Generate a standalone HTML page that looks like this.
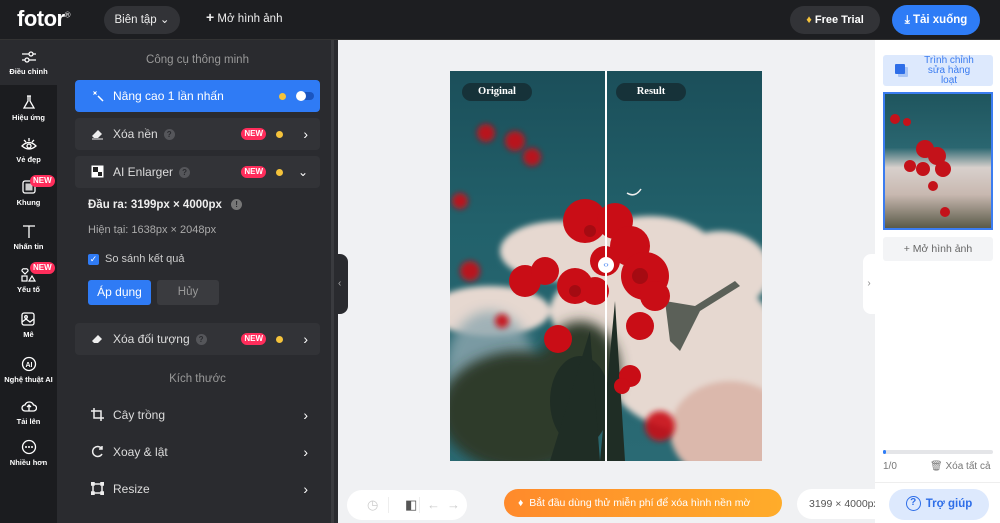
<!DOCTYPE html><html><head><meta charset="utf-8"><style>
*{box-sizing:border-box;margin:0;padding:0}
html{overflow:hidden;width:1000px;height:523px}
body{width:1000px;height:523px;overflow:hidden;font-family:"Liberation Sans",sans-serif;background:#f0f1f3;position:relative;font-size:12px}
.top{position:absolute;left:0;top:0;width:1000px;height:40px;background:#1d1e21;border-bottom:1px solid #333}
.side{position:absolute;left:0;top:40px;width:57px;height:483px;background:#1b1c1f}
.panel{position:absolute;left:57px;top:40px;width:281px;height:483px;background:#2a2b2f}
.si{position:absolute;left:0;width:57px;text-align:center;color:#fff;font-size:7.5px;font-weight:bold}
.si svg{display:block;margin:0 auto 3px}
.row{position:absolute;left:75px;width:245px;height:32px;border-radius:4px;background:#323337;color:#ddd;font-size:12px;line-height:32px;padding-left:38px}
.new{position:absolute;right:54px;top:10px;background:#ff2d5b;color:#fff;font-size:8px;font-weight:bold;border-radius:6px;padding:0 3px;line-height:12px}
.dot{position:absolute;right:37px;top:13px;width:7px;height:7px;border-radius:50%;background:#f5c33b}
.chev{position:absolute;right:12px;top:0;color:#fff;font-size:14px}
.q{display:inline-block;width:11px;height:11px;border-radius:50%;background:#55565a;color:#2a2b2f;font-size:8px;line-height:11px;text-align:center;margin-left:6px;vertical-align:middle;font-weight:bold}
.ic{position:absolute;left:16px;top:9px;width:13px;height:13px}
.plain{position:absolute;left:90px;color:#ddd;font-size:12px}
</style></head><body>
<div class="top">
<div style="position:absolute;left:17px;top:6px;color:#fff;font-size:22px;font-weight:bold;letter-spacing:-0.5px">fotor<sup style="font-size:8px;font-weight:normal">®</sup></div>
<div style="position:absolute;left:104px;top:6px;width:76px;height:28px;border-radius:14px;background:#323337;color:#eee;font-size:11.5px;line-height:28px;text-align:center">Biên tập ⌄</div>
<div style="position:absolute;left:206px;top:12px;color:#eee;font-size:11.5px"><b style="font-size:14px;line-height:10px">+</b> Mở hình ảnh</div>
<div style="position:absolute;left:790px;top:6px;width:90px;height:28px;border-radius:14px;background:#323337;color:#fff;font-size:11px;font-weight:bold;line-height:28px;text-align:center"><span style="color:#f5c33b">♦</span> Free Trial</div>
<div style="position:absolute;left:892px;top:5px;width:88px;height:30px;border-radius:15px;background:#2e7cf6;color:#fff;font-size:11.5px;font-weight:bold;line-height:30px;text-align:center">⤓ Tải xuống</div>
</div>
<div class="side">
<div style="position:absolute;left:0;top:0;width:57px;height:45px;background:#2a2b2f"></div>
<div class="si" style="top:10px"><svg width="16" height="14" viewBox="0 0 16 14" fill="none" stroke="#fff" stroke-width="1.3"><path d="M1 4h14M1 10h14"/><circle cx="10" cy="4" r="2" fill="#2a2b2f"/><circle cx="6" cy="10" r="2" fill="#2a2b2f"/></svg>Điều chỉnh</div>
<div class="si" style="top:55px"><svg width="14" height="15" viewBox="0 0 14 15" fill="none" stroke="#fff" stroke-width="1.3"><path d="M5 1h4M6 1v5L2 13h10L8 6V1"/></svg>Hiệu ứng</div>
<div class="si" style="top:97px"><svg width="16" height="15" viewBox="0 0 16 15" fill="none" stroke="#fff" stroke-width="1.3"><path d="M1 9q7-7 14 0q-7 6-14 0z"/><circle cx="8" cy="9" r="2"/><path d="M8 1v3M3 3l2 2M13 3l-2 2"/></svg>Vẻ đẹp</div>
<div class="si" style="top:140px"><svg width="14" height="15" viewBox="0 0 14 15"><rect x="1" y="1" width="12" height="12" rx="2" fill="none" stroke="#fff" stroke-width="1.3"/><rect x="3.5" y="3.5" width="7" height="7" fill="#ccc"/></svg>Khung</div>
<div class="new" style="left:30px;right:auto;top:135px">NEW</div>
<div class="si" style="top:184px"><svg width="14" height="15" viewBox="0 0 14 15" fill="none" stroke="#fff" stroke-width="1.3"><path d="M1 2h12M7 2v12"/></svg>Nhấn tin</div>
<div class="si" style="top:227px"><svg width="16" height="15" viewBox="0 0 16 15" fill="none" stroke="#fff" stroke-width="1.2"><path d="M4 7L1 4a2 2 0 0 1 3-2a2 2 0 0 1 3 2z"/><rect x="1" y="9" width="5" height="5"/><path d="M11 9l3 5h-6z"/></svg>Yếu tố</div>
<div class="new" style="left:30px;right:auto;top:222px">NEW</div>
<div class="si" style="top:272px"><svg width="15" height="15" viewBox="0 0 15 15" fill="none" stroke="#fff" stroke-width="1.3"><rect x="1" y="1" width="12" height="12" rx="2"/><path d="M1 10l4-3 4 3 4-3"/><circle cx="5" cy="5" r="1.3"/></svg>Mê</div>
<div class="si" style="top:316px"><svg width="16" height="16" viewBox="0 0 16 16"><circle cx="8" cy="8" r="6.5" fill="none" stroke="#fff" stroke-width="1.3"/><text x="8" y="11" font-size="7" font-weight="bold" fill="#fff" text-anchor="middle" font-family="Liberation Sans">AI</text></svg>Nghệ thuật AI</div>
<div class="si" style="top:359px"><svg width="16" height="15" viewBox="0 0 16 15" fill="none" stroke="#fff" stroke-width="1.3"><path d="M4 12a3 3 0 0 1 0-6a4.5 4.5 0 0 1 8.5 0a3 3 0 0 1 0 6z"/><path d="M8 12V6M6 8l2-2 2 2"/></svg>Tải lên</div>
<div class="si" style="top:399px"><svg width="16" height="16" viewBox="0 0 16 16"><circle cx="8" cy="8" r="6.5" fill="none" stroke="#fff" stroke-width="1.3"/><circle cx="5" cy="8" r="1" fill="#fff"/><circle cx="8" cy="8" r="1" fill="#fff"/><circle cx="11" cy="8" r="1" fill="#fff"/></svg>Nhiều hơn</div>
</div>
<div class="panel"></div>
<div style="position:absolute;left:331px;top:40px;width:3px;height:483px;background:#3a3b3f"></div>
<div style="position:absolute;left:57px;top:54px;width:281px;text-align:center;color:#999;font-size:11.5px">Công cụ thông minh</div>
<div class="row" style="top:80px;background:#2f7bf5;color:#fff">
<svg class="ic" viewBox="0 0 13 13" fill="#fff"><path d="M2 2l2 1 2-1-1 2 1 2-2-1-2 1 1-2z"/><path d="M7 7l5 5" stroke="#fff" stroke-width="1.5"/></svg>Nâng cao 1 lần nhấn
<div class="dot" style="right:34px"></div>
<div style="position:absolute;right:6px;top:12px;width:18px;height:8px;border-radius:4px;background:#1a55c0"></div>
<div style="position:absolute;right:14px;top:11px;width:10px;height:10px;border-radius:50%;background:#fff"></div>
</div>
<div class="row" style="top:118px"><svg class="ic" viewBox="0 0 13 13"><path d="M1 9l6-6 4 4-4 4H3z" fill="#eee"/><path d="M1 12h11" stroke="#eee"/></svg>Xóa nền<span class="q">?</span><div class="new">NEW</div><div class="dot"></div><div class="chev">›</div></div>
<div class="row" style="top:156px"><svg class="ic" viewBox="0 0 13 13"><rect x=".5" y=".5" width="12" height="12" fill="#fff"/><rect x="2" y="2" width="5" height="5" fill="#222"/><rect x="7" y="7" width="4" height="4" fill="#222"/></svg>AI Enlarger<span class="q">?</span><div class="new">NEW</div><div class="dot"></div><div class="chev" style="font-size:12px">⌄</div></div>
<div class="plain" style="left:88px;top:199px;color:#eee;font-weight:bold;font-size:11.5px">Đầu ra: 3199px × 4000px <span class="q" style="background:#777">!</span></div>
<div class="plain" style="left:88px;top:224px;color:#aaa;font-size:11px">Hiện tại: 1638px × 2048px</div>
<div style="position:absolute;left:88px;top:254px;width:11px;height:11px;border-radius:2px;background:#2f7bf5;color:#fff;font-size:9px;line-height:11px;text-align:center">✓</div>
<div class="plain" style="left:105px;top:253px;color:#ccc;font-size:11px">So sánh kết quả</div>
<div style="position:absolute;left:88px;top:280px;width:63px;height:25px;border-radius:3px;background:#2f7bf5;color:#fff;font-size:12px;line-height:25px;text-align:center">Áp dụng</div>
<div style="position:absolute;left:157px;top:280px;width:62px;height:25px;border-radius:3px;background:#3a3b3f;color:#999;font-size:11.5px;line-height:25px;text-align:center">Hủy</div>
<div class="row" style="top:323px"><svg class="ic" viewBox="0 0 13 13"><path d="M1 9l6-6 4 4-4 4H3z" fill="#eee"/></svg>Xóa đối tượng<span class="q">?</span><div class="new">NEW</div><div class="dot"></div><div class="chev">›</div></div>
<div style="position:absolute;left:57px;top:373px;width:281px;text-align:center;color:#999;font-size:11.5px">Kích thước</div>
<div class="row" style="top:399px;background:none"><svg class="ic" viewBox="0 0 13 13" fill="none" stroke="#eee" stroke-width="1.5"><path d="M3 0v10h10M0 3h10v10"/></svg>Cây trồng<div class="chev">›</div></div>
<div class="row" style="top:436px;background:none"><svg class="ic" viewBox="0 0 13 13" fill="none" stroke="#eee" stroke-width="1.5"><path d="M11 4A5 5 0 1 0 11 9M11 1v3H8"/></svg>Xoay &amp; lật<div class="chev">›</div></div>
<div class="row" style="top:473px;background:none"><svg class="ic" viewBox="0 0 13 13" fill="none" stroke="#eee" stroke-width="1.5"><rect x="2" y="2" width="9" height="9"/><rect x="0" y="0" width="3" height="3" fill="#eee"/><rect x="10" y="0" width="3" height="3" fill="#eee"/><rect x="0" y="10" width="3" height="3" fill="#eee"/><rect x="10" y="10" width="3" height="3" fill="#eee"/></svg>Resize<div class="chev">›</div></div>
<div style="position:absolute;left:338px;top:254px;width:10px;height:60px;background:#2a2b2f;border-radius:0 8px 8px 0;color:#aaa;font-size:10px;line-height:60px">‹</div>
<div style="position:absolute;left:863px;top:254px;width:12px;height:60px;background:#fff;border-radius:8px 0 0 8px;color:#888;font-size:10px;line-height:60px;text-align:center">›</div>
<!-- image -->
<div style="position:absolute;left:450px;top:71px;width:312px;height:390px;overflow:hidden;background:linear-gradient(180deg,#1b4f5a 0%,#22616b 40%,#2a6a74 100%)">
<svg width="312" height="390" viewBox="0 0 312 390">
<defs><filter id="b"><feGaussianBlur stdDeviation="3"/></filter><filter id="b2"><feGaussianBlur stdDeviation="6"/></filter></defs>
<g fill="#e6d8d0" filter="url(#b)">
<ellipse cx="110" cy="180" rx="60" ry="30"/><ellipse cx="200" cy="190" rx="70" ry="45"/><ellipse cx="270" cy="200" rx="50" ry="40"/>
<ellipse cx="240" cy="280" rx="90" ry="80"/><ellipse cx="40" cy="240" rx="60" ry="25"/><ellipse cx="280" cy="360" rx="60" ry="50" fill="#dbb8ac"/>
<ellipse cx="160" cy="240" rx="60" ry="40"/>
</g>
<g fill="#8fa8b0" filter="url(#b2)" opacity=".8"><ellipse cx="40" cy="300" rx="45" ry="60"/></g>
<g fill="#2e3b2c" filter="url(#b2)"><ellipse cx="70" cy="340" rx="80" ry="60"/><ellipse cx="130" cy="300" rx="40" ry="50"/></g>
<g fill="#1f2d25"><ellipse cx="130" cy="330" rx="30" ry="45"/><path d="M150 390L165 230L175 390zM100 390L140 260L150 390z"/><path d="M215 230l30 5 40-25 5 5-40 25-20 40-10-10z" opacity=".7"/></g>
<g fill="#c90d16" filter="url(#b)" opacity=".9"><circle cx="36" cy="62" r="9"/><circle cx="65" cy="70" r="10"/><circle cx="82" cy="86" r="9"/><circle cx="20" cy="200" r="10"/><circle cx="10" cy="130" r="8"/><circle cx="210" cy="355" r="15"/><circle cx="52" cy="250" r="7"/></g>
<g fill="#c90d16">
<circle cx="135" cy="150" r="22"/><circle cx="165" cy="150" r="18"/><circle cx="180" cy="175" r="20"/><circle cx="195" cy="205" r="24"/><circle cx="205" cy="225" r="15"/>
<circle cx="155" cy="190" r="15"/><circle cx="125" cy="215" r="18"/><circle cx="75" cy="210" r="16"/><circle cx="95" cy="200" r="14"/><circle cx="145" cy="220" r="14"/>
<circle cx="190" cy="255" r="14"/><circle cx="108" cy="268" r="14"/><circle cx="180" cy="305" r="11"/><circle cx="172" cy="315" r="8"/>
</g>
<g fill="#8d0a10" opacity=".6"><circle cx="140" cy="160" r="6"/><circle cx="190" cy="205" r="8"/><circle cx="125" cy="220" r="6"/></g>
<path d="M177 122q8 5 14-4" stroke="#eee" stroke-width="1.5" fill="none"/>
</svg>
<div style="position:absolute;left:155px;top:0;width:2px;height:390px;background:#fff"></div>
<div style="position:absolute;left:148px;top:186px;width:16px;height:16px;border-radius:50%;background:#fff;font-size:8px;line-height:16px;text-align:center;color:#3b7cf0">‹›</div>
<div style="position:absolute;left:12px;top:12px;width:70px;height:18px;border-radius:9px;background:rgba(20,40,45,.75);color:#fff;font-family:'Liberation Serif',serif;font-size:10.5px;font-weight:bold;line-height:18px;text-align:center">Original</div>
<div style="position:absolute;left:166px;top:12px;width:70px;height:18px;border-radius:9px;background:rgba(20,40,45,.75);color:#fff;font-family:'Liberation Serif',serif;font-size:10.5px;font-weight:bold;line-height:18px;text-align:center">Result</div>
</div>
<!-- bottom bar -->
<div style="position:absolute;left:347px;top:490px;width:120px;height:30px;border-radius:15px;background:#fff;color:#ccc;font-size:13px;line-height:30px;white-space:nowrap">
<span style="position:absolute;left:20px">◷</span><span style="position:absolute;left:41px;top:7px;width:1px;height:16px;background:#eee"></span><span style="position:absolute;left:58px;color:#555">◧</span><span style="position:absolute;left:72px;top:7px;width:1px;height:16px;background:#eee"></span><span style="position:absolute;left:80px">←</span><span style="position:absolute;left:100px">→</span></div>
<div style="position:absolute;left:504px;top:489px;width:278px;height:28px;border-radius:14px;background:linear-gradient(90deg,#ff8a2b,#ffac2a);color:#fff;font-size:10.5px;line-height:28px;padding-left:14px;white-space:nowrap">♦&nbsp; Bắt đầu dùng thử miễn phí để xóa hình nền mờ</div>
<div style="position:absolute;left:797px;top:489px;width:90px;height:30px;border-radius:15px 0 0 15px;background:#fff;color:#555;font-size:10.5px;line-height:30px;padding-left:12px;overflow:hidden;white-space:nowrap">3199 × 4000px</div>
<!-- right -->
<div style="position:absolute;left:875px;top:40px;width:125px;height:483px;background:#fff"></div>
<div style="position:absolute;left:883px;top:55px;width:110px;height:31px;border-radius:3px;background:#dde9fd;color:#3b7cf0;font-size:10px;line-height:10px;text-align:center;padding-left:22px;padding-top:1px">Trình chỉnh<br>sửa hàng<br>loạt
<div style="position:absolute;left:12px;top:9px;width:10px;height:10px;background:#2e6ee8;border-radius:1px;box-shadow:3px 3px 0 #a9c5f5"></div></div>
<div style="position:absolute;left:883px;top:92px;width:110px;height:138px;border:2px solid #3b7cf0;background:linear-gradient(180deg,#1f555e 0%,#2a6670 40%,#d8d0cc 55%,#c8b8b0 75%,#5a5a48 100%);overflow:hidden">
<svg width="106" height="134"><g fill="#c4121a"><circle cx="40" cy="55" r="9"/><circle cx="52" cy="62" r="9"/><circle cx="58" cy="75" r="8"/><circle cx="38" cy="75" r="7"/><circle cx="25" cy="72" r="6"/><circle cx="48" cy="92" r="5"/><circle cx="10" cy="25" r="5"/><circle cx="22" cy="28" r="4"/><circle cx="60" cy="118" r="5"/></g></svg></div>
<div style="position:absolute;left:883px;top:237px;width:110px;height:24px;border-radius:3px;background:#f3f4f6;color:#666;font-size:10.5px;line-height:24px;text-align:center">+ Mở hình ảnh</div>
<div style="position:absolute;left:883px;top:450px;width:110px;height:4px;border-radius:2px;background:#e4e5e8"><div style="width:3px;height:4px;background:#2e7cf6;border-radius:2px"></div></div>
<div style="position:absolute;left:883px;top:461px;color:#777;font-size:10px">1/0</div>
<div style="position:absolute;left:930px;top:461px;color:#777;font-size:10px">🗑 Xóa tất cả</div>
<div style="position:absolute;left:875px;top:482px;width:125px;height:1px;background:#eee"></div>
<div style="position:absolute;left:889px;top:489px;width:100px;height:31px;border-radius:16px;background:#dde9fd;color:#2e6ee8;font-size:11.5px;font-weight:bold;line-height:31px;text-align:center"><span style="display:inline-block;width:15px;height:15px;border:1.5px solid #2e6ee8;border-radius:50%;font-size:10px;line-height:12px;vertical-align:middle;margin-right:5px">?</span>Trợ giúp</div>
</body></html>
